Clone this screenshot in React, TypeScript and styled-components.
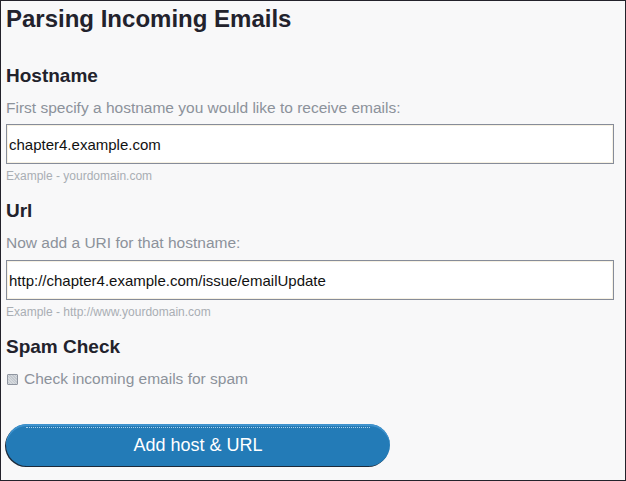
import styled, { createGlobalStyle } from "styled-components";

const GlobalStyle = createGlobalStyle`
  html, body {
    margin: 0;
    padding: 0;
    background: #f8f8f8;
  }
  * {
    box-sizing: border-box;
  }
`;

const Frame = styled.div`
  width: 626px;
  height: 481px;
  border: 1px solid #23222b;
  background: #f8f8f9;
  padding: 4px 11px 0 5px;
  font-family: "Liberation Sans", Arial, sans-serif;
  overflow: hidden;
`;

const Title = styled.h1`
  margin: 0;
  font-size: 24px;
  font-weight: bold;
  line-height: 28px;
  color: #22222c;
`;

const Section = styled.section<{ $gap: number }>`
  margin-top: ${(p) => p.$gap}px;
`;

const Heading = styled.h2`
  margin: 0;
  font-size: 19px;
  font-weight: bold;
  line-height: 22px;
  color: #22222c;
`;

const Help = styled.p`
  margin: 12px 0 0;
  font-size: 15.5px;
  line-height: 18px;
  color: #8c929b;
`;

const TextInput = styled.input<{ $gap: number }>`
  display: block;
  width: 608px;
  height: 40px;
  margin-top: ${(p) => p.$gap}px;
  padding: 0 2px;
  border: 1px solid #868c99;
  box-shadow: inset 1px 1px 0 #f7f1e2, inset -1px -1px 0 #f7f1e2;
  background: #fff;
  font-family: "Liberation Sans", Arial, sans-serif;
  font-size: 15px;
  color: #111;
  outline: none;
`;

const Note = styled.div`
  margin: 5px 0 0;
  font-size: 12px;
  line-height: 14px;
  color: #a9aeb4;
`;

const CheckRow = styled.label`
  display: flex;
  align-items: center;
  gap: 6px;
  margin: 12px 0 0 1px;
  font-size: 15.5px;
  line-height: 18px;
  color: #8c929b;
`;

const Box = styled.span`
  width: 11px;
  height: 11px;
  margin-top: 1px;
  border: 1px solid #8f95a0;
  border-radius: 1px;
  background: repeating-linear-gradient(45deg, #d6dade 0 1px, #c3c8cf 1px 2px);
`;

const SubmitButton = styled.button`
  position: relative;
  display: block;
  width: 384px;
  height: 42px;
  margin-top: 36px;
  border: none;
  border-radius: 21px;
  background: #237bb7;
  box-shadow: -1px 1px 0 #1c2a3a, inset 0 2px 0 #3f92cd;
  color: #fff;
  font-family: "Liberation Sans", Arial, sans-serif;
  font-size: 18px;
  cursor: pointer;
  outline: none;

  &::after {
    content: "";
    position: absolute;
    top: 3px;
    left: 20px;
    right: 20px;
    border-top: 1px dotted #a9d0ec;
  }
`;

export default function App() {
  return (
    <>
      <GlobalStyle />
      <Frame>
        <Title>Parsing Incoming Emails</Title>
        <Section $gap={32}>
          <Heading>Hostname</Heading>
          <Help>First specify a hostname you would like to receive emails:</Help>
          <TextInput $gap={7} defaultValue="chapter4.example.com" />
          <Note>Example - yourdomain.com</Note>
        </Section>
        <Section $gap={17}>
          <Heading>Url</Heading>
          <Help>Now add a URI for that hostname:</Help>
          <TextInput $gap={8} defaultValue="http://chapter4.example.com/issue/emailUpdate" />
          <Note>Example - http://www.yourdomain.com</Note>
        </Section>
        <Section $gap={17}>
          <Heading>Spam Check</Heading>
          <CheckRow>
            <Box />
            Check incoming emails for spam
          </CheckRow>
        </Section>
        <SubmitButton>Add host &amp; URL</SubmitButton>
      </Frame>
    </>
  );
}
